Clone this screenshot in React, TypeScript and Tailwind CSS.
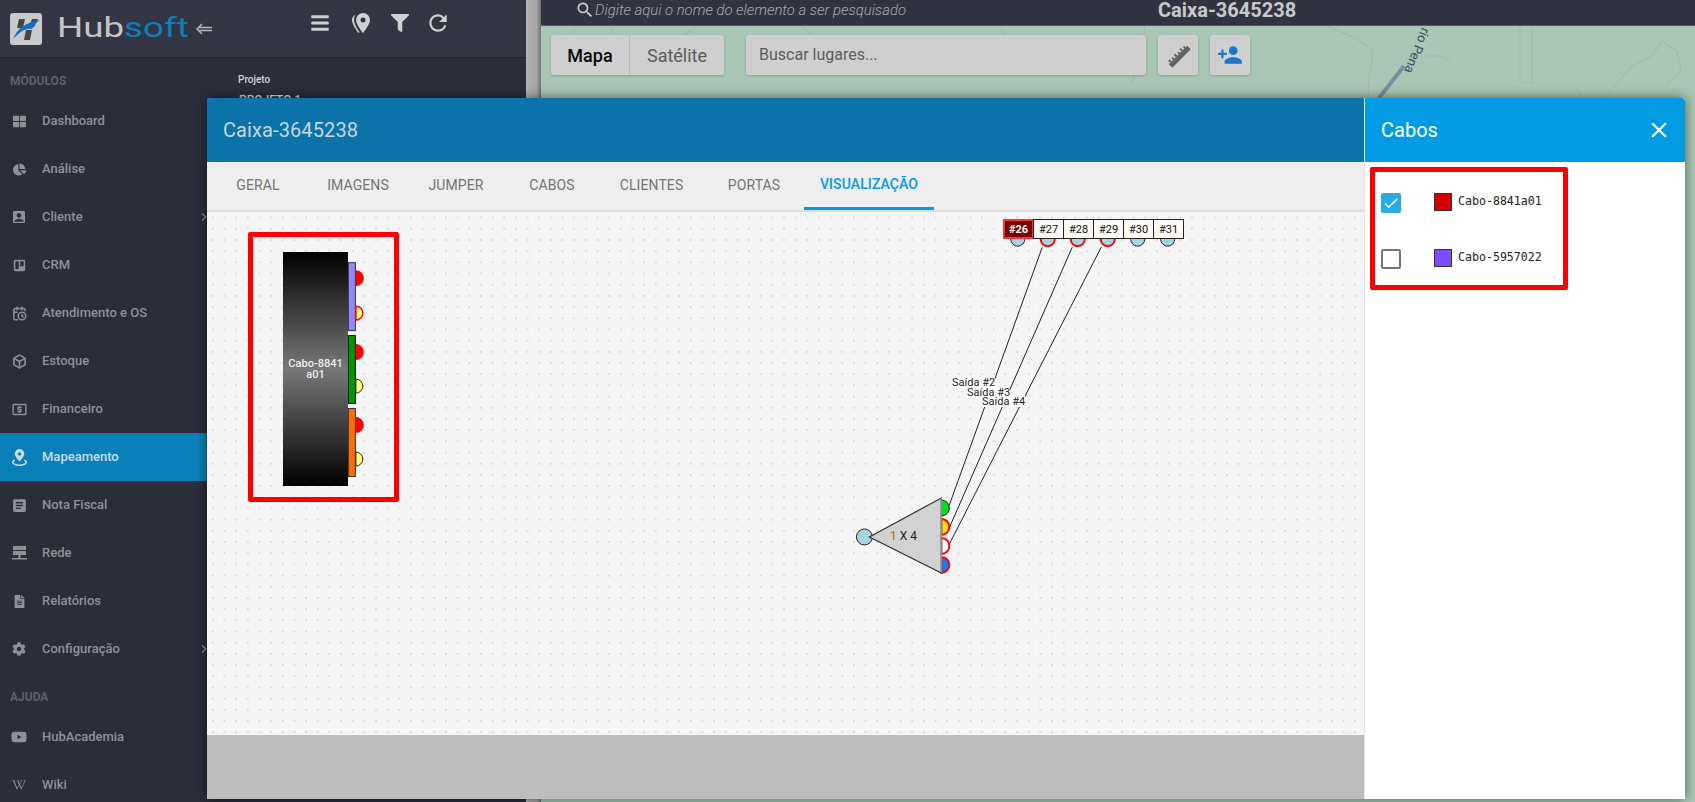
import { ReactNode } from 'react';
import {
  FaBars,
  FaChartPie,
  FaCog,
  FaFileAlt,
  FaFilter,
  FaThLarge,
  FaTrello,
  FaWikipediaW,
  FaYoutube
} from 'react-icons/fa';
import {
  MdAccountBox,
  MdArticle,
  MdCheck,
  MdChevronRight,
  MdClose,
  MdLocalAtm,
  MdPersonAdd,
  MdRefresh,
  MdSearch
} from 'react-icons/md';
import { Box, CalendarClock } from 'lucide-react';

type NavItem = {
  label: string;
  icon: ReactNode;
  active?: boolean;
  arrow?: boolean;
};

function MapPinIcon() {
  return (
    <svg width="15" height="17" viewBox="0 0 15 17" fill="currentColor">
      <path d="M7.500 0a4.800 4.800 0 0 1 4.800 4.800c0 3-4.800 7.700-4.800 7.700S2.700 7.800 2.700 4.800A4.800 4.800 0 0 1 7.500 0zm0 3.200a1.700 1.700 0 1 0 0 3.400 1.700 1.700 0 0 0 0-3.400z" />
      <path d="M2.200 10.500C.8 11.300 0 12.200 0 13.300 0 15.400 3.400 17 7.500 17s7.500-1.600 7.500-3.700c0-1.100-.8-2-2.200-2.800l-.9 1.300c1 .5 1.500 1 1.500 1.500 0 1-2.600 2.200-5.900 2.200s-5.900-1.200-5.900-2.200c0-.5.500-1 1.500-1.500z" />
    </svg>
  );
}

function NetworkIcon() {
  return (
    <svg width="15" height="14" viewBox="0 0 15 14" fill="currentColor">
      <rect x="1" y="0" width="13" height="4" />
      <rect x="1" y="5" width="13" height="4" />
      <rect x="6.500" y="9" width="2" height="3" />
      <rect x="0" y="12" width="15" height="1.500" />
    </svg>
  );
}

function RulerIcon() {
  return (
    <svg width="26" height="26" viewBox="0 0 26 26" fill="currentColor">
      <g transform="rotate(-45 13 13)">
        <rect x="0" y="13" width="26" height="5" />
        <path d="M2 10h2v3H2zM6 11h2v2H6zM10 10h2v3h-2zM14 11h2v2h-2zM18 10h2v3h-2zM22 11h2v2h-2z" />
      </g>
    </svg>
  );
}

const moduleItems: NavItem[] = [
  { label: 'Dashboard', icon: <FaThLarge size={13} /> },
  { label: 'Análise', icon: <FaChartPie size={13} /> },
  { label: 'Cliente', icon: <MdAccountBox size={16} />, arrow: true },
  { label: 'CRM', icon: <FaTrello size={13} /> },
  { label: 'Atendimento e OS', icon: <CalendarClock size={15} strokeWidth={2.4} /> },
  { label: 'Estoque', icon: <Box size={15} strokeWidth={2.6} /> },
  { label: 'Financeiro', icon: <MdLocalAtm size={17} /> },
  { label: 'Mapeamento', icon: <MapPinIcon />, active: true },
  { label: 'Nota Fiscal', icon: <MdArticle size={17} /> },
  { label: 'Rede', icon: <NetworkIcon /> },
  { label: 'Relatórios', icon: <FaFileAlt size={13} /> },
  { label: 'Configuração', icon: <FaCog size={14} />, arrow: true }
];

const helpItems: NavItem[] = [
  { label: 'HubAcademia', icon: <FaYoutube size={16} /> },
  { label: 'Wiki', icon: <FaWikipediaW size={14} /> }
];

const tabs = [
  { label: 'GERAL', className: 'w-[102px]' },
  { label: 'IMAGENS', className: 'w-[98px]' },
  { label: 'JUMPER', className: 'w-[98px]' },
  { label: 'CABOS', className: 'w-[94px]' },
  { label: 'CLIENTES', className: 'w-[105px]' },
  { label: 'PORTAS', className: 'w-[100px]' }
];

const ports = ['#27', '#28', '#29', '#30', '#31'];

function halfCircle(x: number, y: number, r: number) {
  return `M${x} ${y - r}A${r} ${r} 0 0 1 ${x} ${y + r}Z`;
}

function NavRow({ item }: { item: NavItem }) {
  return (
    <div
      className={`flex h-12 items-center text-[13px] font-medium ${
        item.active ? 'bg-[#0a80bb] text-[#c6dde9]' : 'text-[#8f9197]'
      }`}
    >
      <span className="flex w-[37px] shrink-0 justify-center pl-[1px]">{item.icon}</span>
      <span className="ml-[5px]">{item.label}</span>
      {item.arrow ? (
        <span className="ml-auto mr-[14px]">
          <MdChevronRight size={16} />
        </span>
      ) : null}
    </div>
  );
}

function Sidebar() {
  return (
    <aside className="flex w-[226px] shrink-0 flex-col bg-[#2b2d38]">
      <div className="flex h-[58px] shrink-0 items-center border-b border-[#26272f] bg-[#333642] pl-[10px]">
        <svg width="32" height="32" viewBox="0 0 32 32">
          <rect width="32" height="32" rx="3" fill="#c9cacb" />
          <path d="M9 6h6l-2 9H7zM22 6h6l-4 8h-5zM16 17h6l-2 10h-6z" fill="#454547" />
          <path d="M3 26C7 16 16 9 30 7c-4 2-6 6-8 9-7-1-12 3-19 10z" fill="#0f6fc4" />
        </svg>
        <span className="ml-[15px] inline-block w-[130px] origin-left scale-x-[1.36] whitespace-nowrap text-[27px] font-normal leading-none">
          <span className="text-[#c4c5c7]">Hub</span>
          <span className="text-[#0d7fb8]">soft</span>
        </span>
        <svg className="ml-[9px]" width="16" height="12" viewBox="0 0 16 12" fill="none" stroke="#b5b6b9" strokeWidth="1.5">
          <path d="M6 1 1 6l5 5M3 4.500h13M3 7.500h13" />
        </svg>
      </div>
      <p className="mt-[16px] pl-[10px] text-[12px] font-bold leading-[14px] text-[#5f616a]">MÓDULOS</p>
      <nav className="mt-[9px]">
        {moduleItems.map((item) => (
          <NavRow key={item.label} item={item} />
        ))}
      </nav>
      <p className="mt-[17px] pl-[10px] text-[12px] font-bold leading-[14px] text-[#5f616a]">AJUDA</p>
      <nav className="mt-[9px]">
        {helpItems.map((item) => (
          <NavRow key={item.label} item={item} />
        ))}
      </nav>
    </aside>
  );
}

function FilterPanel() {
  return (
    <section className="flex w-[300px] shrink-0 flex-col bg-[#2b2d38]">
      <div className="flex h-[58px] shrink-0 items-center border-b border-[#26272f] bg-[#333642] pb-[11px] pl-[84px] text-[#cfd0d2]">
        <FaBars size={20} />
        <svg className="ml-[21px]" width="20" height="22" viewBox="0 0 20 22" fill="currentColor">
          <path d="M12 1a7 7 0 0 1 7 7c0 4.700-7 13-7 13S5 12.700 5 8a7 7 0 0 1 7-7zm0 4.500a2.500 2.500 0 1 0 0 5 2.500 2.500 0 0 0 0-5z" />
          <path d="M4.500 2.500C2 4 1 6 1 8c0 4 4 10 6.500 13l1-1C6 16.500 3 11.500 3 8c0-2 .5-4 1.500-5.500z" />
        </svg>
        <span className="ml-[20px]">
          <FaFilter size={18} />
        </span>
        <span className="ml-[16px]">
          <MdRefresh size={26} />
        </span>
      </div>
      <p className="mt-[16px] pl-[12px] text-[10px] font-medium leading-3 text-[#d6d7d9]">Projeto</p>
      <p className="mt-[6px] pl-[13px] text-[12px] font-medium leading-4 text-[#d6d7d9]">PROJETO 1</p>
    </section>
  );
}

function MapArea() {
  return (
    <main className="relative min-w-0 flex-1 bg-[#a9c7b4]">
      <div className="relative z-10 flex h-[26px] items-center border-b border-[#55585c] bg-[#313440] pb-[5px]">
        <span className="ml-[34px] text-[#cfd0d2]">
          <MdSearch size={20} />
        </span>
        <span className="text-[14.850px] font-light italic leading-none text-[#a7a9ad]">
          Digite aqui o nome do elemento a ser pesquisado
        </span>
        <span className="ml-[252px] text-[20px] font-bold leading-none text-[#c8c9cb]">Caixa-3645238</span>
      </div>
      <svg className="absolute left-0 top-0 h-full w-full" viewBox="541 0 1154 802" fill="none" stroke="#9fb8b2" strokeWidth="1">
        <path d="M575 25l-4 18M610 26l10 20-20 8M700 25l-30 18M800 25l25 20M1000 25l8 20M1145 25l-4 30-10 30" />
        <path d="M1327 26c20 8 35 15 45 24 3 15-8 30-2 48M1520 25v58h12V25" />
        <path d="M1577 88l10 20 20-14 25-28 20-10 10-15 15 10 4 20-15 14" />
        <path d="M1425 56h18l8 8" />
        <path d="M1404 66l-25 32" stroke="#7a8da5" strokeWidth="4" />
        <text x="1422" y="27" transform="rotate(112 1422 27)" fill="#3e4c5c" stroke="none" fontSize="13" fontFamily="Roboto, sans-serif">
          rio Pena
        </text>
      </svg>
      <div className="relative mt-[9px] ml-[10px] flex items-start">
        <div className="flex h-10 overflow-hidden rounded-[3px] bg-[#cfcfcf] text-[18px] shadow-[0_1px_3px_rgba(0,0,0,0.2)]">
          <span className="flex w-[79px] items-center justify-center border-r border-[#bcbcbc] font-medium text-[#0a0a0a]">Mapa</span>
          <span className="flex w-[94px] items-center justify-center text-[#5a5a5a]">Satélite</span>
        </div>
        <div className="ml-[22px] flex h-10 w-[400px] items-center rounded-[3px] bg-[#cfcfcf] pl-[13px] text-[16px] text-[#5d5d5d] shadow-[0_1px_3px_rgba(0,0,0,0.2)]">
          Buscar lugares...
        </div>
        <div className="ml-[12px] flex h-10 w-10 items-center justify-center rounded-[3px] bg-[#cfcfcf] text-[#636363] shadow-[0_1px_3px_rgba(0,0,0,0.2)]">
          <RulerIcon />
        </div>
        <div className="ml-[12px] flex h-10 w-10 items-center justify-center rounded-[3px] bg-[#cfcfcf] text-[#1976c8] shadow-[0_1px_3px_rgba(0,0,0,0.2)]">
          <MdPersonAdd size={26} />
        </div>
      </div>
    </main>
  );
}

function CableNode() {
  return (
    <>
      <div className="absolute left-[76px] top-[40px] flex h-[234px] w-[65px] items-center justify-center bg-[linear-gradient(#000000,#787878_50%,#000000)] text-center text-[11px] font-medium leading-[11px] text-[#eeeeee]">
        Cabo-8841
        <br />
        a01
      </div>
      <div className="absolute left-[41px] top-[20px] h-[270px] w-[151px] rounded-[2px] border-[5px] border-[#ff0000]" />
    </>
  );
}

function PortStrip() {
  return (
    <div className="absolute left-[796px] top-[7px] flex h-[20px] text-[11px] leading-none">
      <span className="flex w-[31px] items-center justify-center border-2 border-[#f03a3a] bg-[#7a0000] font-bold text-white">#26</span>
      {ports.map((port) => (
        <span key={port} className="-ml-[1px] flex w-[31px] items-center justify-center border border-[#222222] bg-[#fdfaf3] text-[#111111]">
          {port}
        </span>
      ))}
    </div>
  );
}

function Diagram() {
  return (
    <div className="relative h-[523px] shrink-0 bg-[#f5f5f5] bg-[radial-gradient(#c6c6c6_0.6px,transparent_0.8px)] bg-[size:11.670px_11.200px]">
      <svg className="absolute inset-0 h-full w-full" viewBox="207 212 1158 523" fill="none">
        {/* tubos do cabo */}
        <rect x="348.500" y="262.500" width="7" height="68" fill="#9088ff" stroke="#333333" />
        <rect x="348.500" y="335.500" width="7" height="68" fill="#049404" stroke="#111111" />
        <rect x="348.500" y="408.500" width="7" height="68" fill="#ff6d00" stroke="#333333" />
        <path d={halfCircle(356, 278, 8)} fill="#ff0000" />
        <path d={halfCircle(356, 313, 7)} fill="#ffff80" stroke="#ff0000" strokeWidth="1.500" />
        <path d={halfCircle(356, 352, 8)} fill="#ff0000" />
        <path d={halfCircle(356, 386, 7)} fill="#ffff80" stroke="#222222" />
        <path d={halfCircle(356, 425, 8)} fill="#ff0000" />
        <path d={halfCircle(356, 459, 7)} fill="#ffff80" stroke="#222222" />

        {/* portas */}
        <circle cx="1018.500" cy="239" r="7" fill="#a8d4e2" stroke="#222222" />
        <circle cx="1048.500" cy="239" r="7" fill="#a8d4e2" stroke="#ff0000" strokeWidth="2" />
        <circle cx="1078.500" cy="239" r="7" fill="#a8d4e2" stroke="#ff0000" strokeWidth="2" />
        <circle cx="1108.500" cy="239" r="7" fill="#a8d4e2" stroke="#ff0000" strokeWidth="2" />
        <circle cx="1138.500" cy="239" r="7" fill="#a8d4e2" stroke="#222222" />
        <circle cx="1168.500" cy="239" r="7" fill="#a8d4e2" stroke="#222222" />

        {/* fibras */}
        <path d="M950 505 1043 247M949 530 1073 247M947 550 1102 247" stroke="#222222" strokeWidth="1" />

        {/* splitter */}
        <circle cx="865" cy="537" r="8" fill="#a8d4e2" stroke="#222222" />
        <path d={halfCircle(942, 508, 8)} fill="#00e020" stroke="#222222" />
        <path d={halfCircle(942, 527, 8)} fill="#f0e020" stroke="#ff0000" strokeWidth="2" />
        <path d={halfCircle(942, 546, 8)} fill="#ffffff" stroke="#ff0000" strokeWidth="2" />
        <path d={halfCircle(942, 565, 8)} fill="#1080f0" stroke="#ff0000" strokeWidth="2" />
        <path d="M942 498 870 537 942 573Z" fill="#d2d2d2" stroke="#333333" strokeWidth="1.200" />
        <path d="M942 498V573" stroke="#8a8a8a" strokeWidth="1.500" />
      </svg>
      <span className="absolute left-[683px] top-[318px] text-[12px] leading-none text-[#222222]">
        <span className="text-[#a06a00]">1</span> X 4
      </span>
      <span className="absolute left-[745px] top-[165px] bg-white text-[11px] leading-[11px] text-[#222222]">Saída #2</span>
      <span className="absolute left-[760px] top-[175px] bg-white text-[11px] leading-[11px] text-[#222222]">Saída #3</span>
      <span className="absolute left-[775px] top-[184px] bg-white text-[11px] leading-[11px] text-[#222222]">Saída #4</span>
      <CableNode />
      <PortStrip />
    </div>
  );
}

function CableOption({ checked, color, label }: { checked: boolean; color: string; label: string }) {
  return (
    <div className="flex h-[56px] items-start">
      {checked ? (
        <span className="mt-[6px] flex h-5 w-5 items-center justify-center rounded-[2px] bg-[#29aae8] text-white">
          <MdCheck size={18} />
        </span>
      ) : (
        <span className="mt-[6px] h-5 w-5 rounded-[2px] border-2 border-[#757575]" />
      )}
      <span className="ml-[33px] mt-[6px] h-[18px] w-[18px] border border-[#333333]" style={{ backgroundColor: color }} />
      <span className="ml-[6px] mt-[5px] font-['DejaVu_Sans_Mono',monospace] text-[11.600px] leading-[18px] text-[#222222]">{label}</span>
    </div>
  );
}

function CablesPanel() {
  return (
    <div className="flex w-[320px] shrink-0 flex-col bg-white">
      <div className="flex h-[64px] items-center justify-between rounded-tr-[3px] bg-[#049be5] pl-[16px] pr-[13px] text-white">
        <span className="text-[20px] leading-none">Cabos</span>
        <MdClose size={26} />
      </div>
      <div className="ml-[5px] mt-[5px] h-[123px] w-[198px] rounded-[2px] border-[5px] border-[#ff0000] pl-[6px] pt-[15px]">
        <CableOption checked color="#d50000" label="Cabo-8841a01" />
        <CableOption checked={false} color="#7c4dff" label="Cabo-5957022" />
      </div>
    </div>
  );
}

function BoxModal() {
  return (
    <div className="absolute left-[207px] top-[98px] flex h-[701px] w-[1478px] overflow-hidden rounded-t-[3px] shadow-[0_0_12px_rgba(0,0,0,0.55)]">
      <div className="flex min-w-0 flex-1 flex-col border-r border-[#e4e4e4] bg-[#bdbdbd]">
        <div className="flex h-[64px] shrink-0 items-center bg-[#0b72aa] pl-[16px] text-[20px] leading-none tracking-[0.1px] text-[#c7d6df]">Caixa-3645238</div>
        <div className="flex h-[50px] shrink-0 items-start border-b-2 border-[#dddddd] bg-[#eeeeee] text-[14px] tracking-[0.1px] text-[#757575]">
          <div className="flex h-[48px]">
            {tabs.map((tab) => (
              <span key={tab.label} className={`flex h-[46px] items-center justify-center ${tab.className}`}>
                {tab.label}
              </span>
            ))}
            <span className="flex h-full w-[130px] items-center justify-center border-b-[3px] border-[#039be5] pb-[1px] font-medium text-[#039be5]">
              VISUALIZAÇÃO
            </span>
          </div>
        </div>
        <Diagram />
      </div>
      <CablesPanel />
    </div>
  );
}

export default function App() {
  return (
    <div className="relative flex h-[802px] w-[1695px] overflow-hidden bg-[#2b2d38] font-['Roboto',sans-serif]">
      <Sidebar />
      <FilterPanel />
      <div className="w-[15px] shrink-0 bg-[linear-gradient(90deg,#b4b4b4,#a6a6a6_70%,#6f6f6f)]" />
      <MapArea />
      <BoxModal />
    </div>
  );
}
